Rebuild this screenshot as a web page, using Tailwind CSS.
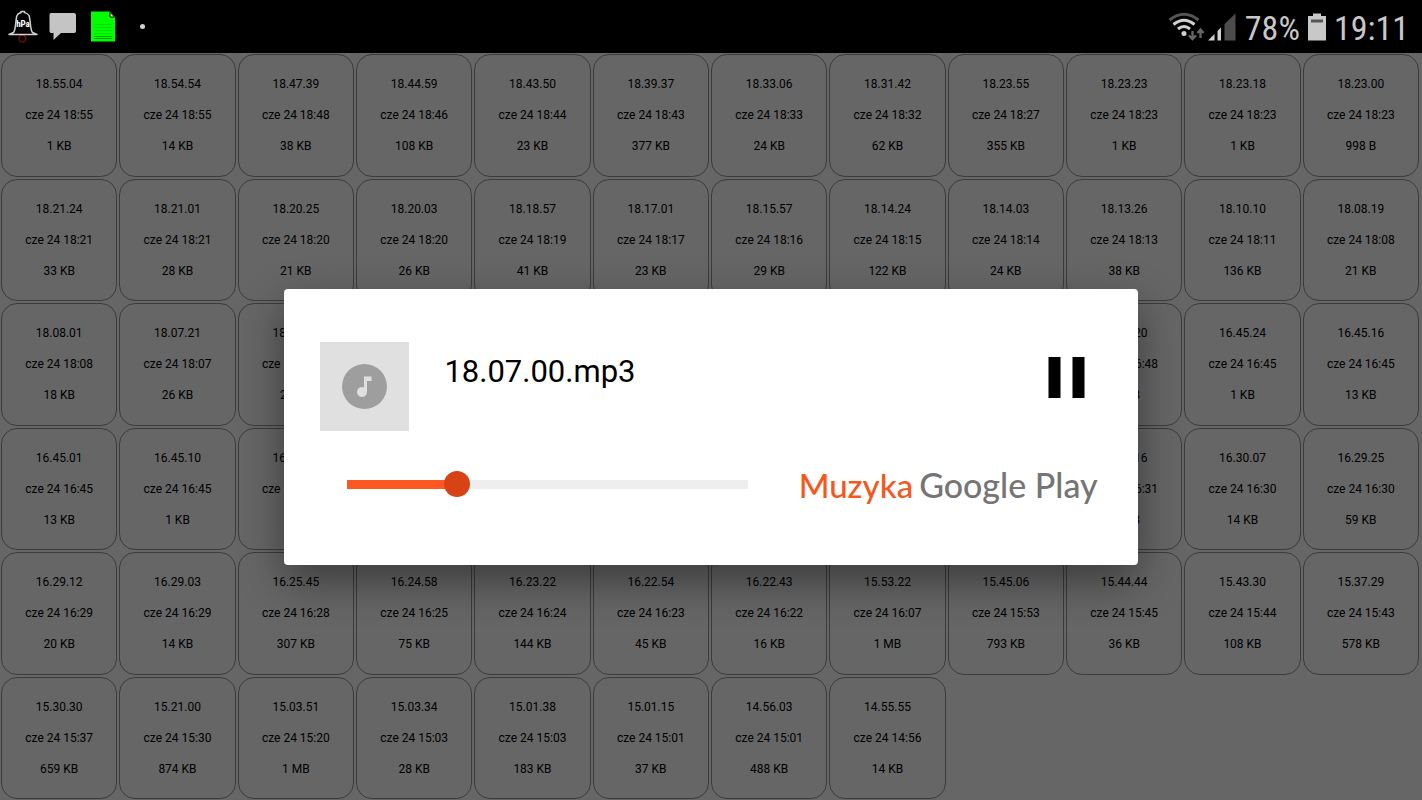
<!DOCTYPE html>
<html lang="pl">
<head>
<meta charset="utf-8">
<meta name="viewport" content="width=device-width, initial-scale=1">
<title>18.07.00.mp3</title>
<script src="https://cdn.jsdelivr.net/npm/@tailwindcss/browser@4"></script>
</head>
<body class="flex min-h-screen flex-col bg-[#666] font-['Roboto',sans-serif] text-black">
  <header class="flex h-[53px] items-center bg-black pl-2 pr-[13px] text-[#c8c8c8]">
    <!-- pressure alarm -->
    <svg class="h-[34px] w-[30px]" viewBox="0 0 30 34" fill="none" aria-hidden="true">
      <circle cx="14.500" cy="28.500" r="3.500" stroke="#7c0c0c" stroke-width="1.300"/>
      <path d="M1 24.500 5.500 22.500C8 20 7.500 9 9 5.500 10 3.500 12 3 13 2.500 V1.500H16.500V2.500C18 3 20 3.500 21 5.500 22.500 9 22 20 24.500 22.500L29 24.500Z" fill="#000" stroke="#d0d0d0" stroke-width="1.500" stroke-linejoin="round"/>
      <text x="15" y="17" text-anchor="middle" font-family="Roboto Condensed" font-weight="700" font-size="9" fill="#fff">hPa</text>
    </svg>
    <!-- message -->
    <svg class="ml-[11px] h-[29px] w-[28px]" viewBox="0 0 28 29" aria-hidden="true">
      <path d="M2 1H25Q27 1 27 3V19Q27 21 25 21H12L4.500 28V21H2Q.500 21 .500 19V3Q.500 1 2 1Z" fill="#c4c4c4"/>
    </svg>
    <!-- document -->
    <svg class="ml-[13px] h-[31px] w-[26px]" viewBox="0 0 26 31" aria-hidden="true">
      <path d="M1 .500H20L25 6V30.500H1Z" fill="#0f0"/>
      <path d="M20 1V6H24.500Z" fill="#e8e080" stroke="#151500" stroke-width="1"/>
      <path d="M4 13.500H22M4 16.500H22M4 19.500H22M4 22.500H22" stroke="#00dc00" stroke-width="1"/>
      <path d="M4 25.500H22M4 27.500H22" stroke="#009c00" stroke-width="1"/>
    </svg>
    <span class="ml-[24px] size-[5px] rounded-full bg-[#d0d0d0]"></span>

    <!-- wifi with traffic arrows -->
    <svg class="ml-auto h-[30px] w-[37px]" viewBox="0 0 37 30" fill="none" aria-hidden="true">
      <path d="M1.500 8Q16 -3.500 30.500 8" stroke="#555" stroke-width="3"/>
      <path d="M5.500 12.500Q16 4 26.500 12.500" stroke="#d0d0d0" stroke-width="3"/>
      <path d="M10 17Q16 12 22 17" stroke="#d0d0d0" stroke-width="3"/>
      <circle cx="16" cy="21.500" r="2.500" fill="#d0d0d0"/>
      <path d="M24.500 19V26.500M21 23.500 24.500 27 28 23.500M32.500 26V18M29.500 21 32.500 17.500 35.500 21" stroke="#666" stroke-width="2.300"/>
    </svg>
    <!-- cellular signal -->
    <svg class="ml-[3px] h-[28px] w-[28px]" viewBox="0 0 28 28" aria-hidden="true">
      <path d="M0 27.500 6.500 21V27.500ZM9.500 18 13 14.500V27.500H9.500Z" fill="#d0d0d0"/>
      <path d="M16.500 11 27.500 .500V27.500H16.500Z" fill="#4c4c4c"/>
    </svg>
    <span class="ml-[9px] pt-[2px] text-[34px] leading-[36px] font-['Roboto_Condensed','Roboto',sans-serif]">78%</span>
    <!-- battery -->
    <svg class="ml-[7px] h-[28px] w-[20px]" viewBox="0 0 20 28" aria-hidden="true">
      <path d="M6 .500H14V3H19V27.500H1V3H6Z" fill="#c8c8c8"/>
      <path d="M4 6.500H16V9.500H4Z" fill="#555"/>
    </svg>
    <time class="ml-[7px] pt-[2px] text-[34px] leading-[36px] font-['Roboto_Condensed','Roboto',sans-serif]">19:11</time>
  </header>

  <main class="relative flex flex-1 flex-col">
    <ul id="files" class="grid flex-1 auto-rows-fr grid-cols-12 gap-[2px] pt-px pr-[3px] pb-px pl-px"></ul>

    <div class="absolute inset-0 flex items-center justify-center">
      <section role="dialog" aria-labelledby="track" class="w-3/5 rounded-[4px] bg-white pt-[53px] pb-[58px] pl-9 shadow-[0_16px_44px_rgba(0,0,0,0.42)]">
        <div class="flex items-start pr-[53px]">
          <div class="flex size-[89px] shrink-0 items-center justify-center bg-[#e0e0e0]">
            <svg class="size-[45px]" viewBox="0 0 45 45" aria-hidden="true">
              <circle cx="22.500" cy="22.500" r="22.500" fill="#9e9e9e"/>
              <path d="M22 12.500H29.500V17H25V28A5 5 0 1 1 22 23.500Z" fill="#e0e0e0"/>
            </svg>
          </div>
          <h1 id="track" class="ml-[35px] mt-[12px] flex-1 text-[31px] leading-[36px]">18.07.00.mp3</h1>
          <button type="button" aria-label="Pauza" class="mt-[15px]">
            <svg class="block h-[41px] w-[37px]" viewBox="0 0 37 41" aria-hidden="true">
              <path d="M.500 0H12.500V41H.500ZM24.500 0H36.500V41H24.500Z" fill="#000"/>
            </svg>
          </button>
        </div>
        <div class="mt-[32px] flex h-[44px] items-center pr-[40px] pl-[27px]">
          <input id="seek" type="range" min="0" max="1000" value="257" aria-label="Pozycja odtwarzania"
            style="--fill:27.3%"
            class="h-[26px] w-0 min-w-0 flex-1 appearance-none bg-transparent [&::-webkit-slider-runnable-track]:h-[9px] [&::-webkit-slider-runnable-track]:bg-[linear-gradient(to_right,#ff5722_var(--fill),#eee_var(--fill))] [&::-webkit-slider-thumb]:-mt-[9px] [&::-webkit-slider-thumb]:size-[26px] [&::-webkit-slider-thumb]:appearance-none [&::-webkit-slider-thumb]:rounded-full [&::-webkit-slider-thumb]:bg-[#d84315]">
          <p class="ml-[51px] flex items-baseline gap-[6px] font-['Lato',sans-serif] leading-[44px] font-medium whitespace-nowrap text-[#757575]"><span class="text-[33px] text-[#f4581e]">Muzyka</span><span class="text-[34px]">Google Play</span></p>
        </div>
      </section>
    </div>
  </main>

<script>
  const rows = [
    "18.55.04|18:55|1 KB,18.54.54|18:55|14 KB,18.47.39|18:48|38 KB,18.44.59|18:46|108 KB,18.43.50|18:44|23 KB,18.39.37|18:43|377 KB,18.33.06|18:33|24 KB,18.31.42|18:32|62 KB,18.23.55|18:27|355 KB,18.23.23|18:23|1 KB,18.23.18|18:23|1 KB,18.23.00|18:23|998 B",
    "18.21.24|18:21|33 KB,18.21.01|18:21|28 KB,18.20.25|18:20|21 KB,18.20.03|18:20|26 KB,18.18.57|18:19|41 KB,18.17.01|18:17|23 KB,18.15.57|18:16|29 KB,18.14.24|18:15|122 KB,18.14.03|18:14|24 KB,18.13.26|18:13|38 KB,18.10.10|18:11|136 KB,18.08.19|18:08|21 KB",
    "18.08.01|18:08|18 KB,18.07.21|18:07|26 KB,18.07.00|18:07|26 KB,,,,,,,16.48.20|16:48|28 KB,16.45.24|16:45|1 KB,16.45.16|16:45|13 KB",
    "16.45.01|16:45|13 KB,16.45.10|16:45|1 KB,16.44.50|16:44|1 KB,,,,,,,16.31.16|16:31|28 KB,16.30.07|16:30|14 KB,16.29.25|16:30|59 KB",
    "16.29.12|16:29|20 KB,16.29.03|16:29|14 KB,16.25.45|16:28|307 KB,16.24.58|16:25|75 KB,16.23.22|16:24|144 KB,16.22.54|16:23|45 KB,16.22.43|16:22|16 KB,15.53.22|16:07|1 MB,15.45.06|15:53|793 KB,15.44.44|15:45|36 KB,15.43.30|15:44|108 KB,15.37.29|15:43|578 KB",
    "15.30.30|15:37|659 KB,15.21.00|15:30|874 KB,15.03.51|15:20|1 MB,15.03.34|15:03|28 KB,15.01.38|15:03|183 KB,15.01.15|15:01|37 KB,14.56.03|15:01|488 KB,14.55.55|14:56|14 KB"
  ];
  const list = document.getElementById("files");
  for (const entry of rows.join(",").split(",")) {
    const item = document.createElement("li");
    item.className = "flex flex-col items-center justify-center rounded-[16px] border border-[#3c3c3c] pt-px text-[12px] leading-[31px] whitespace-nowrap";
    if (entry) {
      const [name, time, size] = entry.split("|");
      for (const text of [name, "cze 24 " + time, size]) {
        const line = document.createElement("span");
        line.textContent = text;
        item.append(line);
      }
    }
    list.append(item);
  }

  const seek = document.getElementById("seek");
  seek.addEventListener("input", () => {
    seek.style.setProperty("--fill", seek.value / 10 + "%");
  });
</script>
</body>
</html>
